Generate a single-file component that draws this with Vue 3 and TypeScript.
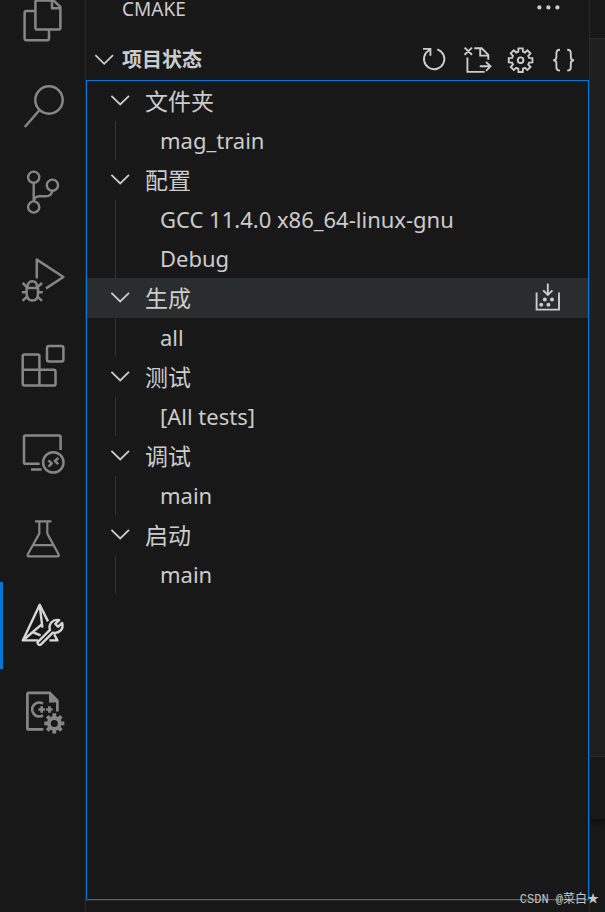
<script setup lang="ts">
import { ref } from 'vue'

interface Shape {
  d: string
  fill?: boolean
}

interface Activity {
  id: string
  label: string
  width: number
  shapes: Shape[]
}

interface Group {
  label: string
  items: string[]
  hovered?: boolean
}

/** Outline of a circle, so that every icon can be described by paths only. */
function circle(cx: number, cy: number, r: number): string {
  return `M${cx - r} ${cy}a${r} ${r} 0 1 0 ${2 * r} 0a${r} ${r} 0 1 0 ${-2 * r} 0z`
}

/** Outline of an eight-toothed gear. */
function gear(cx: number, cy: number, outer: number, inner: number): string {
  const points: string[] = []
  for (let i = 0; i < 8; i++) {
    const middle = (i * Math.PI) / 4
    const corners: [number, number][] = [
      [-0.27, inner],
      [-0.18, outer],
      [0.18, outer],
      [0.27, inner],
    ]
    for (const [offset, radius] of corners) {
      const x = cx + radius * Math.sin(middle + offset)
      const y = cy - radius * Math.cos(middle + offset)
      points.push(`${x.toFixed(2)} ${y.toFixed(2)}`)
    }
  }
  return `M${points.join('L')}z`
}

const activities: Activity[] = [
  {
    id: 'files',
    label: '资源管理器',
    width: 2.5,
    shapes: [
      { d: 'M17.8 4.4H34.5L41.4 11V31.8Q41.4 33.4 39.8 33.4H18Q16.4 33.4 16.4 31.8V5.8Q16.4 4.4 17.8 4.4zM33 5V12.2H41' },
      { d: 'M16 15H7.3Q5.6 15 5.6 16.6V42.6Q5.6 44.3 7.3 44.3H28.4Q30 44.3 30 42.6V34' },
    ],
  },
  {
    id: 'search',
    label: '搜索',
    width: 2.5,
    shapes: [{ d: circle(30, 17, 13.7) }, { d: 'M20.6 27L5.8 44' }],
  },
  {
    id: 'git',
    label: '源代码管理',
    width: 2.4,
    shapes: [
      { d: circle(14.7, 8.2, 5.6) },
      { d: circle(33.4, 16.2, 5.6) },
      { d: circle(14.7, 38, 5.6) },
      { d: 'M14.7 14V32.4M33.4 22Q32 27.3 27 27.3H20.5Q15.5 27.5 14.7 32.4' },
    ],
  },
  {
    id: 'debug',
    label: '运行和调试',
    width: 2.5,
    shapes: [
      { d: 'M17.8 22.5V3.6L44.4 21L27 32.4' },
      { d: 'M7.6 32H19V37.4C19 42.4 16.5 44.5 13.3 44.5S7.6 42.4 7.6 37.4zM8.4 32C8.4 27.6 10.2 25.3 13.3 25.3S18.2 27.6 18.2 32' },
      { d: 'M8 31L3.6 27M18.6 31L23 27M7.6 36.3H2.8M19 36.3H23.8M8.5 40.2L3.6 44.8M18 40.2L23 44.8' },
    ],
  },
  {
    id: 'extensions',
    label: '扩展',
    width: 2.5,
    shapes: [
      { d: 'M5.3 12.4H18.8Q20.4 12.4 20.4 14V27.7H34.8Q36.5 27.7 36.5 29.4V42Q36.5 43.6 34.8 43.6H5.3Q3.7 43.6 3.7 42V14Q3.7 12.4 5.3 12.4z' },
      { d: 'M3.7 27.7H20.4V43.6' },
      { d: 'M30 4H42.4Q44.4 4 44.4 6V17.6Q44.4 19.6 42.4 19.6H30Q28 19.6 28 17.6V6Q28 4 30 4z' },
    ],
  },
  {
    id: 'remote',
    label: '远程资源管理器',
    width: 2.5,
    shapes: [
      { d: 'M41.6 22V9.2Q41.6 7.6 40 7.6H6.6Q5 7.6 5 9.2V34.2Q5 35.8 6.6 35.8H20.6M12 41.4H22.6' },
      { d: circle(34.3, 34.4, 10.2) },
      { d: 'M29.4 32.4L32.8 35.4L29.4 38.6M39.3 30L35.8 33L39.3 36.2' },
    ],
  },
  {
    id: 'testing',
    label: '测试',
    width: 2.2,
    shapes: [
      { d: 'M16 6.3H32.4M20.3 6.3V18.6L8.8 39.2Q8 41.4 10 41.4H38.4Q40.4 41.4 39.6 39.2L28.3 18.6V6.3M13.8 30.2H34.5' },
    ],
  },
  {
    id: 'cmake',
    label: 'CMake',
    width: 2.4,
    shapes: [
      { d: 'M29 20.4L20.7 3.8L3.8 39.4H19M30.4 39.4H38.4L35.2 33.2' },
      { d: 'M20.7 4L23.4 26.6M4.4 39L22.4 23.6M13.6 31.2L21.6 34.4' },
      { d: 'M19.2 40.6L31 28.8C29.2 23.2 33.8 17.6 40.2 19.2L36.2 22.8L39 25.8L43.2 22C45 28.4 39.8 33 33.8 31.6L22 43.4C20 45 17.6 42.4 19.2 40.6z' },
    ],
  },
  {
    id: 'cpp',
    label: 'C/C++',
    width: 2.7,
    shapes: [
      { d: 'M24.4 41.4H9.6Q8.4 41.4 8.4 40.2V6Q8.4 4.8 9.6 4.8H30.6L38.4 12.6V23.6' },
      { d: 'M30 4L39.7 14.4H30z', fill: true },
      { d: 'M24 15.6A7 7 0 1 0 24 27.4' },
      { d: 'M22.7 18.2V24.8M19.4 21.5H26M30.4 18.2V24.8M27.1 21.5H33.7' },
      { d: gear(35.3, 35.4, 10.2, 7.4) + circle(35.3, 35.4, 3.5), fill: true },
    ],
  },
]

const actions = [
  {
    label: '刷新',
    d: 'M17.3 3.3A10.2 10.2 0 1 1 6 6.9L10.2 3.1M3 2.9H10.4V9.7',
  },
  {
    label: '打开文件',
    d: 'M1.6 1.6L9 8.8M9 1.6L1.6 8.8M11.3 2.3H18.7L25.3 8.9V13.8M17.2 2.3V9.6H25M4.4 11.6V25.9H21.7M16.7 20.3H27.3M23 15.8L27.5 20.3L23 24.8',
  },
  {
    label: '设置',
    d: gear(14.6, 14.2, 12, 8.8) + circle(14.6, 14.2, 2.8),
  },
  {
    label: '编辑 JSON',
    d: 'M11 3.8Q7.4 3.8 7.4 7.2V11Q7.4 14.2 4.2 14.2Q7.4 14.2 7.4 17.4V21.2Q7.4 24.6 11 24.6M18.2 3.8Q21.8 3.8 21.8 7.2V11Q21.8 14.2 25 14.2Q21.8 14.2 21.8 17.4V21.2Q21.8 24.6 18.2 24.6',
  },
]

const groups: Group[] = [
  { label: '文件夹', items: ['mag_train'] },
  { label: '配置', items: ['GCC 11.4.0 x86_64-linux-gnu', 'Debug'] },
  { label: '生成', items: ['all'], hovered: true },
  { label: '测试', items: ['[All tests]'] },
  { label: '调试', items: ['main'] },
  { label: '启动', items: ['main'] },
]

const active = ref('cmake')
const sectionOpen = ref(true)
const closed = ref<string[]>([])

function toggle(label: string): void {
  closed.value = closed.value.includes(label)
    ? closed.value.filter((name) => name !== label)
    : [...closed.value, label]
}
</script>

<template>
  <div class="window">
    <nav class="activity-bar">
      <div class="activity-list">
        <button
          v-for="item in activities"
          :key="item.id"
          type="button"
          class="activity"
          :class="{ active: active === item.id }"
          :aria-label="item.label"
          @click="active = item.id"
        >
          <svg viewBox="0 0 48 48" :stroke-width="item.width">
            <path v-for="(shape, i) in item.shapes" :key="i" :d="shape.d" :class="{ solid: shape.fill }" />
          </svg>
        </button>
      </div>
    </nav>

    <aside class="sidebar">
      <header class="title-bar">
        <h2>CMAKE</h2>
        <button type="button" class="more-button" aria-label="更多">
          <svg viewBox="0 0 28 16" class="dots">
            <circle cx="5.4" cy="7.4" r="2.1" />
            <circle cx="14.4" cy="7.4" r="2.1" />
            <circle cx="23.4" cy="7.4" r="2.1" />
          </svg>
        </button>
      </header>

      <div class="section-bar">
        <button type="button" class="section-toggle" :aria-expanded="sectionOpen" @click="sectionOpen = !sectionOpen">
          <svg class="chevron" viewBox="0 0 20 20"><path d="M1.4 5.2L10.2 13.8L19 5.2" /></svg>
          <span>项目状态</span>
        </button>
        <div class="actions">
          <button v-for="action in actions" :key="action.label" type="button" class="icon-button" :aria-label="action.label">
            <svg viewBox="0 0 28 28"><path :d="action.d" /></svg>
          </button>
        </div>
      </div>

      <div class="tree">
        <ul v-if="sectionOpen">
          <li v-for="group in groups" :key="group.label">
            <div class="group-row" :class="{ hovered: group.hovered }">
              <button
                type="button"
                class="group-toggle"
                :aria-expanded="!closed.includes(group.label)"
                @click="toggle(group.label)"
              >
                <svg class="chevron" viewBox="0 0 20 20"><path d="M1.4 4.8L10.2 13.4L19 4.8" /></svg>
                <span>{{ group.label }}</span>
              </button>
              <button v-if="group.hovered" type="button" class="icon-button" aria-label="生成">
                <svg viewBox="0 0 28 28">
                  <path d="M2.6 8.4V25.6H25V8.4M13.8 -0.6V10.4M9.2 6.4L13.8 11L18.4 6.4" />
                  <g class="dots">
                    <circle cx="10.8" cy="15.4" r="2" />
                    <circle cx="18" cy="15.4" r="2" />
                    <circle cx="7.2" cy="20.8" r="2" />
                    <circle cx="14.4" cy="20.8" r="2" />
                  </g>
                </svg>
              </button>
            </div>
            <ul v-if="!closed.includes(group.label)" class="leaves">
              <li v-for="item in group.items" :key="item">{{ item }}</li>
            </ul>
          </li>
        </ul>
      </div>
      <div class="next-section"></div>
    </aside>

    <main class="editor">
      <div class="tabs"></div>
      <div class="page"></div>
      <div class="panel"></div>
      <div class="panel-foot"></div>
    </main>

    <div class="watermark">CSDN @菜白★</div>
  </div>
</template>

<style>
body {
  margin: 0;
  background: #181818;
}
</style>

<style scoped>
.window {
  position: relative;
  display: flex;
  height: 100vh;
  overflow: hidden;
  background: #181818;
  color: #cccccc;
  font-family: 'Noto Sans', 'Noto Sans CJK SC', sans-serif;
}

button {
  margin: 0;
  padding: 0;
  border: 0;
  background: none;
  color: inherit;
  font: inherit;
  cursor: pointer;
}

ul {
  margin: 0;
  padding: 0;
  list-style: none;
}

svg {
  display: block;
  fill: none;
  stroke: currentColor;
  overflow: visible;
}

.activity-bar {
  flex: none;
  width: 85px;
  border-right: 1px solid #2b2b2b;
}

.activity-list {
  display: grid;
  grid-template-rows: repeat(9, 1fr);
  height: 778px;
  margin-top: -23px;
}

.activity {
  display: flex;
  align-items: center;
  width: 100%;
  padding-left: 16px;
  border-left: 3px solid transparent;
  color: #868686;
}

.activity.active {
  border-left-color: #0078d4;
  color: #d7d7d7;
}

.activity svg {
  width: 48px;
  height: 48px;
  stroke-linejoin: round;
}

.activity .solid {
  fill: currentColor;
  fill-rule: evenodd;
  stroke: none;
}

.sidebar {
  flex: 1;
  display: flex;
  flex-direction: column;
  min-width: 0;
}

.title-bar {
  display: flex;
  align-items: flex-start;
  justify-content: space-between;
  height: 39px;
  padding: 0 27px 0 36px;
}

h2 {
  margin: 0;
  font-size: 19px;
  font-weight: 400;
  line-height: 18px;
}

.section-bar {
  display: flex;
  align-items: center;
  justify-content: space-between;
  height: 41px;
  padding: 0 12px 0 8px;
}

.section-toggle {
  display: flex;
  align-items: center;
  gap: 8px;
  font-size: 20px;
  font-weight: 700;
  line-height: 28px;
}

.actions {
  display: flex;
  gap: 15px;
}

.icon-button {
  flex: none;
  width: 28px;
  height: 28px;
}

.icon-button svg {
  width: 28px;
  height: 28px;
  stroke-width: 1.9;
}

.more-button svg {
  width: 28px;
  height: 16px;
}

.dots {
  fill: currentColor;
  stroke: none;
}

.chevron {
  flex: none;
  width: 20px;
  height: 20px;
  stroke-width: 1.8;
}

.tree {
  flex: 1;
  min-height: 0;
  overflow: hidden;
  border: 1px solid #0078d4;
  font-size: 22px;
}

.group-row {
  display: flex;
  align-items: center;
  height: 40px;
  padding: 0 26px 0 23px;
}

.group-row.hovered {
  background: #2a2d2e;
}

.group-toggle {
  flex: 1;
  display: flex;
  align-items: center;
  gap: 15px;
  height: 40px;
  font-size: 23px;
  line-height: 40px;
  text-align: left;
}

.leaves {
  margin-left: 28px;
  padding-left: 44px;
  border-left: 1px solid #333333;
}

.leaves li {
  height: 39px;
  line-height: 39px;
  white-space: nowrap;
}

.next-section {
  flex: none;
  height: 11px;
  border-top: 1px solid #2b2b2b;
}

.editor {
  flex: none;
  display: flex;
  flex-direction: column;
  width: 15px;
  border-left: 1px solid #2b2b2b;
}

.tabs {
  height: 38px;
  border-bottom: 1px solid #2b2b2b;
}

.page {
  flex: 1;
  background: #1f1f1f;
}

.panel {
  height: 62px;
  border-top: 1px solid #2b2b2b;
}

.panel-foot {
  height: 93px;
  background: linear-gradient(#0e0e0e, #181818 8px);
}

.watermark {
  position: absolute;
  right: 6px;
  bottom: 4px;
  color: #c4c4c4;
  font-family: 'Liberation Mono', 'Noto Sans CJK SC', monospace;
  font-size: 12px;
  line-height: 16px;
  white-space: nowrap;
}
</style>
